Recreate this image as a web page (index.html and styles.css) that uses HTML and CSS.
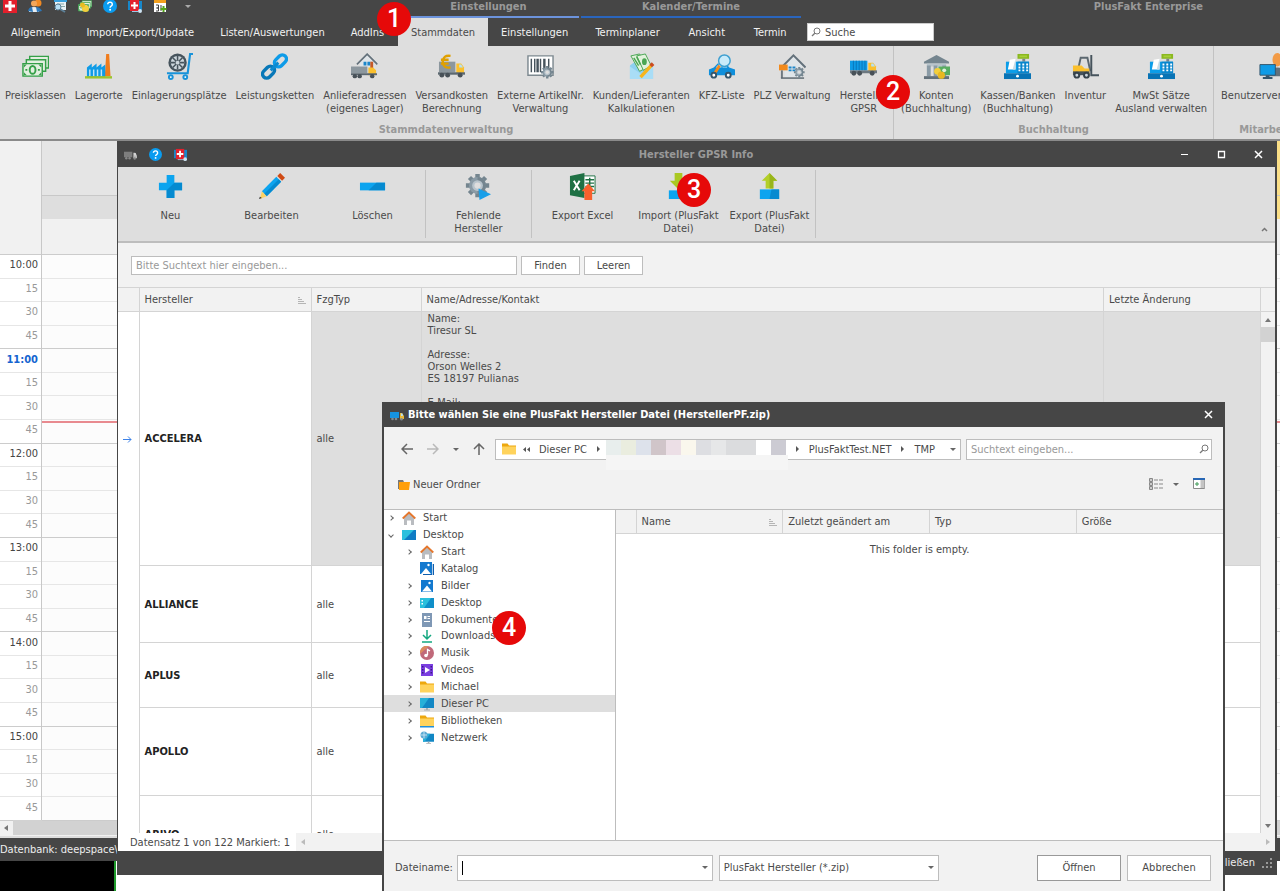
FILE: index.html
```html
<!DOCTYPE html>
<html lang="de">
<head>
    <meta charset="UTF-8">
    <meta name="viewport" content="width=device-width, initial-scale=1.0">
    <title>PlusFakt Enterprise</title>
    <link rel="stylesheet" href="styles.css">
</head>
<body>

    <!-- Shared icons -->
    <svg class="sprite" aria-hidden="true">
        <symbol id="i-help" viewBox="0 0 14 14"><circle cx="7" cy="7" r="7" fill="#0a9cf0"/><path d="M4.7 5.2a2.3 2.1 0 1 1 3.4 1.9q-1 .6-1 1.6" fill="none" stroke="#fff" stroke-width="1.5"/><circle cx="7.1" cy="10.7" r="1" fill="#fff"/></symbol>
        <symbol id="i-support" viewBox="0 0 14 14"><path fill="#1787c9" d="M0 2h14v9H0z"/><path fill="#9ccbe8" d="M4 12h6v1H4z"/><path fill="#e3202c" d="M2 1h9v11H2z"/><path fill="#fff" d="M5.500 3h2v2.500H10v2H7.500V10h-2V7.500H3v-2h2.500z"/><circle cx="12" cy="12" r="2" fill="#cfe4f2"/></symbol>
        <symbol id="i-truck" viewBox="0 0 28 28"><path fill="#0f9be6" d="M0 8h18v10H0z"/><path stroke="#0876b8" d="M3.500 8v10M6.500 8v10M9.500 8v10M12.500 8v10M15.500 8v10"/><path fill="#fbc02d" d="M19 10h5l3 4v6h-8z"/><path fill="#b3e1f5" d="M22 11h2l2 3h-4z"/><path fill="#6d7880" d="M0 18h28v3H0z"/><g fill="#485158"><circle cx="4" cy="21" r="2.500"/><circle cx="10" cy="21" r="2.500"/><circle cx="23" cy="21" r="2.500"/></g></symbol>
        <symbol id="i-truck-small" viewBox="0 0 14 14"><path fill="#1593e0" d="M0 4h9v6H0z"/><path fill="#e9b93a" d="M10 5h2l2 3v3h-4z"/><path fill="#b3e1f5" d="M11 5.500h1.500L13 8h-2z"/><g fill="#7f8a92"><circle cx="2.500" cy="11" r="1.300"/><circle cx="6" cy="11" r="1.300"/><circle cx="11.500" cy="11.300" r="1.300"/></g></symbol>
        <symbol id="i-register" viewBox="0 0 28 28"><path fill="#8ab81f" d="M14 1h12v5H14z"/><path fill="#a6cf3a" d="M16 2.500h8v2h-8z"/><path fill="#7a858c" d="M19 6h3v3h-3z"/><path fill="#0c9de8" d="M2 9h24v12H2z"/><path fill="#0885cc" d="M14 9h12v12H14z"/><path fill="#fff" d="M6 7l6-1v11H4z"/><path fill="#c9dce6" d="M12 6v11H9z"/><path fill="#fff" d="M15 11h2v2h-2zm4 0h2v2h-2zm4 0h2v2h-2zm-8 3h2v2h-2zm4 0h2v2h-2zm4 0h2v2h-2zm-8 3h2v2h-2zm4 0h2v2h-2zm4 0h2v2h-2z"/><path fill="#0873b5" d="M0 21h28v6H0z"/><circle cx="14" cy="24" r="1.500" fill="#fff"/></symbol>
        <symbol id="i-gear" viewBox="0 0 28 28"><g stroke="#74858f" stroke-width="5"><path d="M14 1v26M1 14h26M5 5l18 18M23 5L5 23"/></g><circle cx="14" cy="14" r="9.500" fill="#8a9ba6"/><path d="M14 4.500a9.500 9.500 0 0 1 0 19z" fill="#74858f"/><circle cx="14" cy="14" r="6" fill="#b8c4cc"/><circle cx="14" cy="14" r="3.500" fill="#dedede"/></symbol>
        <symbol id="i-lens" viewBox="0 0 10 10"><circle cx="6" cy="4" r="3" fill="none" stroke="#777"/><path d="M3.800 6.200L1 9" stroke="#777" stroke-width="1.300"/></symbol>
        <symbol id="i-home" viewBox="0 0 14 14"><path fill="#b9bcc0" d="M2 6l5-4 5 4v8H9V9.500H5V14H2z"/><path d="M.7 7.500L7 1.500l6.300 6" fill="none" stroke="#e5762b" stroke-width="1.800"/></symbol>
        <symbol id="i-picture" viewBox="0 0 14 14"><path fill="#1379cf" d="M1 1h12v12H1z"/><path fill="#fff" d="M2 12.500l5-6 5 6z"/><circle cx="9.500" cy="4" r="1.200" fill="#fff"/></symbol>
        <symbol id="i-folder" viewBox="0 0 14 14"><path fill="#eda80e" d="M0 1.500h5.500L7 3.500h7V12H0z"/><path fill="#ffd35c" d="M0 4.500h14v8H0z"/></symbol>
        <symbol id="i-screen" viewBox="0 0 14 14"><path fill="#1287c4" d="M0 1h14v10H0z"/><path fill="#27b0d8" d="M0 1h9L2 11H0z"/><path fill="#a6acb0" d="M6 11h2v1.500h2v1H4v-1h2z"/></symbol>
        <symbol id="i-sort" viewBox="0 0 8 8"><path d="M0 1.500h2M0 3.500h4M0 5.500h6M0 7.500h8" stroke="#b5b5b5"/></symbol>
        <symbol id="i-house" viewBox="0 0 28 28"><path fill="#dfe5e9" d="M6 13l9-9 9 9v12H6z"/><path d="M2.500 15L15 2.500 27.500 15" fill="none" stroke="#63717b" stroke-width="2"/></symbol>
        <symbol id="i-notes" viewBox="0 0 28 28"><g fill="#e3efe0" stroke="#35a048" stroke-width="1.500"><path d="M8 3.500h19.500v12H8z"/><path d="M4.500 7h20v12h-20z"/><path d="M1 11h20v13H1z"/></g><ellipse cx="11" cy="17.500" rx="3" ry="4" fill="none" stroke="#35a048" stroke-width="2"/><path fill="#35a048" d="M3.500 16.500h2v2h-2zm13 0h2v2h-2zM2 12h3L2 15zm18 0h-3l3 3zM2 23h3l-3-3zm18 0h-3l3-3z"/></symbol>
    </svg>

    <!-- Main window -->
    <header class="app-header">
        <div class="header-block header-main">
            <div class="quick-access">
                <button aria-label="PlusFakt"><svg viewBox="0 0 14 14"><path fill="#e3202c" d="M0 0h14v14H0z"/><path fill="#fff" d="M5.500 2h3v3.500H12v3H8.500V12h-3V8.500H2v-3h3.500z"/></svg></button>
                <button aria-label="Kunden"><svg viewBox="0 0 14 14"><circle cx="10" cy="4" r="3.500" fill="#f08a24"/><circle cx="6" cy="4.500" r="3" fill="#f3a65a"/><path fill="#e8eef2" d="M1 13q0-5 5-5t5 5z"/><path fill="#2d77b8" d="M0 12q1-4 4-4l1 5zm8-4q4 0 6 4l-5 1z"/></svg></button>
                <button aria-label="Rechnungen"><svg viewBox="0 0 14 14"><path fill="#e9f1f6" d="M2 0h11v11H2z"/><path fill="#3aa0dc" d="M1 0h13v3H1z"/><path d="M4 5h7M6 7.500h6" stroke="#8aa" /><circle cx="5" cy="8" r="3" fill="#b8dff4" stroke="#5d8198"/><path d="M7 10l5 3" stroke="#5d8198" stroke-width="2"/></svg></button>
                <button aria-label="Kasse"><svg viewBox="0 0 28 28"><use href="#i-notes"/><circle cx="15" cy="19" r="7" fill="#f3cf3c"/><circle cx="9" cy="12" r="5" fill="#e7bc22"/></svg></button>
                <button aria-label="Hilfe"><svg><use href="#i-help"/></svg></button>
                <button aria-label="Fernwartung"><svg><use href="#i-support"/></svg></button>
                <button aria-label="Kalender"><svg viewBox="0 0 14 14"><path fill="#fff" d="M1 1h12v12H1z"/><path fill="#f2a01e" d="M1 0h12v4H1z"/><path d="M3 6h2.500v3H3.500h2v3H3M8 6v6" fill="none" stroke="#444"/><path d="M10.500 7v6M7.500 10h6" stroke="#55a51c" stroke-width="2"/></svg></button>
                <span class="caret"></span>
            </div>
            <nav class="tabs">
                <button>Allgemein</button>
                <button>Import/Export/Update</button>
                <button>Listen/Auswertungen</button>
                <button>AddIns</button>
            </nav>
        </div>
        <div class="header-block context context-settings">
            <div class="context-title">Einstellungen</div>
            <nav class="tabs">
                <button class="active">Stammdaten</button>
                <button>Einstellungen</button>
            </nav>
        </div>
        <div class="header-block context context-calendar">
            <div class="context-title">Kalender/Termine</div>
            <nav class="tabs">
                <button>Terminplaner</button>
                <button>Ansicht</button>
                <button>Termin</button>
            </nav>
        </div>
        <div class="header-block header-rest">
            <div class="app-title">PlusFakt Enterprise</div>
            <label class="ribbon-search">
                <svg><use href="#i-lens"/></svg>
                <input type="text" placeholder="Suche" aria-label="Suche">
            </label>
        </div>
    </header>

    <section class="ribbon">
        <div class="ribbon-group">
            <div class="ribbon-items">
                <button><svg><use href="#i-notes"/></svg><span>Preisklassen</span></button>
                <button><svg viewBox="0 0 28 28"><path fill="#f07c1c" d="M22 1h3l1.500 23h-6z"/><path fill="#0f9be6" d="M2 15l5-4v4l5-4v4l5-4v4l4-3v13H2z"/><path d="M5 17v7M9 17v7M13 17v7M17 17v7" stroke="#bfe4f7" stroke-width="1.500"/><path fill="#9cc42c" d="M0 24h28v2.500H0z"/></svg><span>Lagerorte</span></button>
                <button><svg viewBox="0 0 28 28"><path d="M28 1h-3l-2.500 20H1" fill="none" stroke="#1993d9" stroke-width="2.200"/><circle cx="12" cy="10" r="9.500" fill="#46535c"/><circle cx="12" cy="10" r="7" fill="#cdd6dc"/><path d="M12 3v14M5 10h14M7 5l10 10M17 5L7 15" stroke="#46535c" stroke-width="1.600"/><circle cx="12" cy="10" r="2" fill="#cdd6dc"/><g fill="#fff" stroke="#1993d9" stroke-width="2"><circle cx="5" cy="25" r="2"/><circle cx="20" cy="25" r="2"/></g></svg><span>Einlagerungsplätze</span></button>
                <button><svg viewBox="0 0 28 28"><g fill="none" stroke-width="3.600"><rect x="13" y="4" width="14" height="8.500" rx="4.200" transform="rotate(-45 20 8)" stroke="#0d9be8"/><rect x="1" y="15.500" width="14" height="8.500" rx="4.200" transform="rotate(-45 8 20)" stroke="#0878b8"/></g><path d="M10 18l8-8" stroke="#0c8ad0" stroke-width="3"/></svg><span>Leistungsketten</span></button>
                <button><svg viewBox="0 0 28 28"><g transform="translate(4 -1)scale(.85)"><use href="#i-house" width="28" height="28"/></g><path fill="#1c86c9" d="M13 9h3v4h-3zm4 0h3v4h-3z"/><path fill="#c65a27" d="M20 9h3v8h-3z"/><path fill="#8c979e" d="M0 14h17v7H0z"/><path fill="#fbc02d" d="M18 15h5l3 3v5h-8z"/><path fill="#5c6870" d="M0 21h27v2H0z"/><g fill="#485158"><circle cx="4" cy="24" r="2.300"/><circle cx="9" cy="24" r="2.300"/><circle cx="22" cy="24" r="2.300"/></g></svg><span>Anlieferadressen<br>(eigenes Lager)</span></button>
                <button><svg viewBox="0 0 28 28"><path fill="#8c979e" d="M1 9h17v11H1z"/><path d="M13 3q-8-1-8 6t8 6M3 7h8M3 11h8" fill="none" stroke="#e0a000" stroke-width="2.500"/><path fill="#fbc02d" d="M19 11h5l3 4v6h-8z"/><path fill="#b3e1f5" d="M22 12h2l2 3h-4z"/><path fill="#5c6870" d="M0 20h28v2.500H0z"/><g fill="#485158"><circle cx="4" cy="23" r="2.500"/><circle cx="10" cy="23" r="2.500"/><circle cx="23" cy="23" r="2.500"/></g></svg><span>Versandkosten<br>Berechnung</span></button>
                <button><svg viewBox="0 0 28 28"><path fill="#fff" stroke="#7d8990" stroke-width="1.500" d="M1 3h26v20H1z"/><path d="M4.500 6v14M8 6v14M14 6v14M22.500 6v12" stroke="#46535c" stroke-width="1.500"/><path d="M11 6v14M18 6v12" stroke="#46535c" stroke-width="2.500"/><use href="#i-gear" x="14" y="13" width="14" height="14"/></svg><span>Externe ArtikelNr.<br>Verwaltung</span></button>
                <button><svg viewBox="0 0 28 28"><path fill="#8ed0f0" d="M2 13L14 4l12 9v14H2z"/><g fill="#e2f2dc" stroke="#4aa653"><path d="M3 3l9-2 8 14-8 4z"/><path d="M9 3l9-2 6 12-8 5z"/></g><path d="M6 5l5 8M9 4l4 8" stroke="#4aa653" stroke-width="1.500"/><ellipse cx="17" cy="9" rx="2.500" ry="3.500" fill="#4aa653"/><path fill="#a9ddf6" d="M2 14l12 8 12-8v13H2z"/><path d="M13 25L24 13" stroke="#f7b51e" stroke-width="3.500"/><path d="M23.500 13.500l2.500-2.500" stroke="#cc4b1f" stroke-width="3.800"/></svg><span>Kunden/Lieferanten<br>Kalkulationen</span></button>
                <button><svg viewBox="0 0 28 28"><path fill="#0f8fdb" d="M1 17l5-2 4-4h9l3 4 6 2v6H1z"/><path fill="#c3e7f8" d="M8 15l3-3h3v3zm7-3h3l2 3h-5z"/><path d="M12 13l-5 8" stroke="#f28a1c" stroke-width="3"/><circle cx="17" cy="8" r="6" fill="#c9ebfa" stroke="#3e9fd0" stroke-width="1.500"/><g fill="#fff" stroke="#35566c" stroke-width="2"><circle cx="6" cy="23" r="2.500"/><circle cx="21" cy="23" r="2.500"/></g></svg><span>KFZ-Liste</span></button>
                <button><svg viewBox="0 0 28 28"><use href="#i-house" width="28" height="28"/><path fill="#f28a1c" d="M0 12h9v6H0z"/><path fill="#6d7880" d="M2 18h2v8H2z"/><path fill="#1c86c9" d="M10 14h3v2h-3zm4 0h3v2h-3zm-4 3h3v2h-3zm4 0h3v2h-3z"/><path d="M2 26h24" stroke="#5c6870" stroke-width="1.500"/><use href="#i-gear" x="15" y="14" width="12" height="12"/></svg><span>PLZ Verwaltung</span></button>
                <button><svg><use href="#i-truck"/></svg><span>Hersteller<br>GPSR</span></button>
            </div>
            <div class="ribbon-caption">Stammdatenverwaltung</div>
        </div>
        <div class="ribbon-group">
            <div class="ribbon-items">
                <button><svg viewBox="0 0 28 28"><path fill="#74858f" d="M1 9L14 2l13 7v2H1z"/><path fill="#b8c4cc" d="M4 11h20v3H4z"/><path fill="#8a9ba6" d="M4 13h4v11H4zm7 0h4v11h-4zm9 0h4v11h-4z"/><path fill="#63717b" d="M1 24h26v3H1z"/><path fill="#58ad60" d="M16 14h12v9H16z"/><circle cx="22" cy="18" r="2" fill="#e3f3dd"/><circle cx="15" cy="19" r="3.500" fill="#f3cf3c"/><circle cx="19" cy="23" r="3.800" fill="#e9b820"/></svg><span>Konten<br>(Buchhaltung)</span></button>
                <button><svg><use href="#i-register"/></svg><span>Kassen/Banken<br>(Buchhaltung)</span></button>
                <button><svg viewBox="0 0 28 28"><path d="M7 14l2-9h7l3 14" fill="none" stroke="#5c6870" stroke-width="2"/><path fill="#fbc02d" d="M1 13h9l3 3h5v6H1z"/><path d="M20 2v21h8" fill="none" stroke="#46535c" stroke-width="2"/><path fill="#46535c" d="M1 19h17v4H1z"/><g fill="#cdd6dc" stroke="#35424b" stroke-width="2"><circle cx="5" cy="23" r="2.500"/><circle cx="15" cy="23" r="2.500"/></g></svg><span>Inventur</span></button>
                <button><svg><use href="#i-register"/></svg><span>MwSt Sätze<br>Ausland verwalten</span></button>
            </div>
            <div class="ribbon-caption">Buchhaltung</div>
        </div>
        <div class="ribbon-group">
            <div class="ribbon-items">
                <button><svg viewBox="0 0 28 28"><ellipse cx="20" cy="7" rx="5" ry="7" fill="#f29a45"/><path fill="#63717b" d="M12 24q0-9 8-9t8 9z"/><path fill="#0f9be6" stroke="#35566c" d="M2 12h16v11H2z"/><path fill="#35566c" d="M8 23h4v2h3v2H5v-2h3z"/></svg><span>Benutzerverwaltung</span></button>
            </div>
            <div class="ribbon-caption">Mitarbeiter</div>
        </div>
    </section>

    <!-- Appointment calendar -->
    <main class="calendar">
        <div class="time-column">
            <div class="time-head"></div>
            <ol class="slots">
                <li class="hour">10:00</li><li>15</li><li>30</li><li>45</li>
                <li class="hour current">11:00</li><li>15</li><li>30</li><li>45</li>
                <li class="hour">12:00</li><li>15</li><li>30</li><li>45</li>
                <li class="hour">13:00</li><li>15</li><li>30</li><li>45</li>
                <li class="hour">14:00</li><li>15</li><li>30</li><li>45</li>
                <li class="hour">15:00</li><li>15</li><li>30</li><li>45</li>
            </ol>
        </div>
        <div class="day-column">
            <div class="day-head"></div>
            <div class="day-sub"></div>
            <div class="day-all"></div>
            <ol class="slots">
                <li></li><li></li><li></li><li></li><li></li><li></li><li></li><li></li>
                <li></li><li></li><li></li><li></li><li></li><li></li><li></li><li></li>
                <li></li><li></li><li></li><li></li><li></li><li></li><li></li><li></li>
            </ol>
        </div>
        <div class="day-column today">
            <div class="day-head"></div>
            <div class="day-sub"></div>
            <div class="day-all"></div>
            <ol class="slots">
                <li></li><li></li><li></li><li></li><li></li><li></li><li></li><li></li>
                <li></li><li></li><li></li><li></li><li></li><li></li><li></li><li></li>
                <li></li><li></li><li></li><li></li><li></li><li></li><li></li><li></li>
            </ol>
        </div>
    </main>
    <div class="calendar-scroll"><span class="arrow-left"></span><div class="scroll-thumb"></div></div>
    <footer class="status-bar">Datenbank: deepspace\</footer>
    <div class="desktop"><div class="console"></div></div>

    <!-- Hersteller window -->
    <section class="window maker-window">
        <div class="window-title">
            <div class="window-icons">
                <svg class="gray"><use href="#i-truck-small"/></svg>
                <svg><use href="#i-help"/></svg>
                <svg><use href="#i-support"/></svg>
            </div>
            <h2>Hersteller GPSR Info</h2>
            <div class="window-controls">
                <button aria-label="Minimieren"><svg viewBox="0 0 9 9"><path d="M1 4.500h7" stroke="#fff"/></svg></button>
                <button aria-label="Maximieren"><svg viewBox="0 0 9 9"><path d="M1.500 1.500h6v6h-6z" fill="none" stroke="#fff" stroke-width="1.300"/></svg></button>
                <button aria-label="Fenster schließen"><svg viewBox="0 0 9 9"><path d="M1 1l7 7M8 1L1 8" stroke="#fff" stroke-width="1.500"/></svg></button>
            </div>
        </div>
        <div class="toolbar">
            <div class="tool-group">
                <button><svg viewBox="0 0 28 28"><path fill="#0ca4ef" d="M10 2h8v8h8v8h-8v8h-8v-8H2v-8h8z"/><path fill="#058ad0" d="M18 10h8v8h-8v8h-8v-8z"/></svg><span>Neu</span></button>
                <button><svg viewBox="0 0 28 28"><path fill="#0ca4ef" d="M4 19L19 4l5 5L9 24z"/><path fill="#058ad0" d="M6.500 21.500l15-15L24 9 9 24z"/><path fill="#fbd264" d="M4 19l5 5-7 3z"/><path fill="#333" d="M2 24.500L4 26l-3 1z"/><path fill="#cf4a14" d="M20 3l3-3 5 5-3 3z"/></svg><span>Bearbeiten</span></button>
                <button><svg viewBox="0 0 28 28"><path fill="#0ca4ef" d="M1 10h26v8H1z"/><path fill="#058ad0" d="M18 10h9v8H10z"/></svg><span>Löschen</span></button>
            </div>
            <div class="tool-group">
                <button><svg viewBox="0 0 28 28"><use href="#i-gear" width="26" height="26"/><path fill="#199fe9" d="M14 16l13 6-12 6z"/></svg><span>Fehlende<br>Hersteller</span></button>
            </div>
            <div class="tool-group">
                <button><svg viewBox="0 0 28 28"><path fill="#fff" stroke="#1f7145" d="M14 3h13v18H14z"/><path d="M17 7h9M17 10.500h9M17 14h9M21.500 5v14" stroke="#1f7145" stroke-width="1.500"/><path fill="#1f7145" d="M1 3l15-3v26L1 23z"/><path d="M5 8l6 10M11 8L5 18" stroke="#fff" stroke-width="2"/><path fill="#f8602c" d="M20 11l7 8h-3v9h-8v-9h-3z"/></svg><span>Export Excel</span></button>
                <button class="narrow"><svg viewBox="0 0 28 28"><path fill="#aac822" d="M10 0h8v8h5l-9 9-9-9h5z"/><path fill="#0ca4ef" d="M4 18h20v9H4z"/></svg><span>Import (PlusFakt Datei)</span></button>
                <button class="narrow"><svg viewBox="0 0 28 28"><path fill="#b3cf28" d="M14 0l8 8h-4v8h-8V8H6z"/><path fill="#98b51a" d="M14 0l8 8h-4v8h-4z"/><path fill="#0ca4ef" d="M4 17h20v10H4z"/><path fill="#058ad0" d="M16 17h8v10H14z"/></svg><span>Export (PlusFakt Datei)</span></button>
            </div>
            <button class="collapse" aria-label="Menüband minimieren"><svg viewBox="0 0 7 5"><path d="M1 4l2.500-2.500L6 4" fill="none" stroke="#777" stroke-width="1.500"/></svg></button>
        </div>
        <form class="search-row">
            <input type="text" placeholder="Bitte Suchtext hier eingeben..." aria-label="Suchtext">
            <button type="button">Finden</button>
            <button type="button">Leeren</button>
        </form>
        <div class="grid-area">
            <div class="grid-view">
                <table class="maker-table">
                    <colgroup><col class="col-mark"><col class="col-maker"><col class="col-type"><col><col class="col-date"></colgroup>
                    <thead>
                        <tr><th></th><th>Hersteller<svg class="sort"><use href="#i-sort"/></svg></th><th>FzgTyp</th><th>Name/Adresse/Kontakt</th><th>Letzte Änderung</th></tr>
                    </thead>
                    <tbody>
                        <tr class="row-xl selected">
                            <td><svg class="row-arrow" viewBox="0 0 9 9"><path d="M0 4.500h8M5 1.500l3 3-3 3" fill="none" stroke="#3c82e8"/></svg></td>
                            <td class="maker">ACCELERA</td><td>alle</td>
                            <td class="address">Name:<br>Tiresur SL<br><br>Adresse:<br>Orson Welles 2<br>ES 18197 Pulianas<br><br>E-Mail:</td><td></td>
                        </tr>
                        <tr class="row-m"><td></td><td class="maker">ALLIANCE</td><td>alle</td><td></td><td></td></tr>
                        <tr class="row-s"><td></td><td class="maker">APLUS</td><td>alle</td><td></td><td></td></tr>
                        <tr class="row-l"><td></td><td class="maker">APOLLO</td><td>alle</td><td></td><td></td></tr>
                        <tr class="row-m"><td></td><td class="maker">ARIVO</td><td>alle</td><td></td><td></td></tr>
                    </tbody>
                </table>
            </div>
            <div class="grid-scroll">
                <div class="scroll-head"></div>
                <span class="arrow-up"></span>
                <div class="scroll-thumb"></div>
                <span class="arrow-down"></span>
            </div>
        </div>
        <div class="grid-footer">
            <span class="record">Datensatz 1 von 122 Markiert: 1</span>
            <div class="grid-hscroll"><span class="arrow-left"></span><span class="arrow-right"></span></div>
        </div>
        <div class="window-bottom">
            <button>Schließen</button>
            <svg class="grip" viewBox="0 0 10 10"><path fill="#999" d="M8 0h2v2H8zM8 4h2v2H8zM4 4h2v2H4zM8 8h2v2H8zM4 8h2v2H4zM0 8h2v2H0z"/></svg>
        </div>
    </section>

    <!-- File dialog -->
    <section class="window file-dialog">
        <div class="window-title">
            <svg class="title-icon"><use href="#i-truck-small"/></svg>
            <h2>Bitte wählen Sie eine PlusFakt Hersteller Datei (HerstellerPF.zip)</h2>
            <div class="window-controls">
                <button aria-label="Schließen"><svg viewBox="0 0 9 9"><path d="M1 1l7 7M8 1L1 8" stroke="#fff" stroke-width="1.500"/></svg></button>
            </div>
        </div>
        <div class="path-row">
            <div class="path-nav">
                <button aria-label="Zurück"><svg viewBox="0 0 12 12"><path d="M12 6H1M6 1L1 6l5 5" fill="none" stroke="#666" stroke-width="1.500"/></svg></button>
                <button aria-label="Vorwärts"><svg viewBox="0 0 12 12"><path d="M0 6h11M6 1l5 5-5 5" fill="none" stroke="#b9b9b9" stroke-width="1.500"/></svg></button>
                <button aria-label="Verlauf"><span class="caret"></span></button>
                <button aria-label="Nach oben"><svg viewBox="0 0 12 12"><path d="M6 12V1M1 6l5-5 5 5" fill="none" stroke="#666" stroke-width="1.500"/></svg></button>
            </div>
            <div class="breadcrumb">
                <svg class="crumb-folder"><use href="#i-folder"/></svg>
                <svg class="crumb-back" viewBox="0 0 7 5"><path fill="#555" d="M3 0v5L0 2.500zM7 0v5L4 2.500z"/></svg>
                <button>Dieser PC</button>
                <span class="crumb-sep"></span>
                <div class="hidden-path">
                    <i class="m1"></i><i class="m2"></i><i class="m3"></i><i class="m4"></i><i class="m5"></i><i class="m6"></i><i class="m7"></i><i class="m8"></i><i class="m9"></i><i class="m9"></i><i class="m10"></i><i class="m11"></i>
                </div>
                <span class="crumb-sep"></span>
                <button>PlusFaktTest.NET</button>
                <span class="crumb-sep"></span>
                <button>TMP</button>
                <span class="caret"></span>
            </div>
            <label class="file-search">
                <input type="text" placeholder="Suchtext eingeben..." aria-label="Dateien suchen">
                <svg><use href="#i-lens"/></svg>
            </label>
        </div>
        <div class="command-row">
            <button><svg viewBox="0 0 12 12"><path fill="#777" d="M0 1h5l1 2h5v7H0z"/><path fill="#ff9f0a" d="M1 3h11l-1 8H1z"/></svg>Neuer Ordner</button>
            <div class="view-tools">
                <button aria-label="Ansicht"><svg viewBox="0 0 14 12"><path d="M.5.500h3v3h-3zM.5 4.500h3v3h-3zM.5 8.500h3v3h-3z" fill="#ccc" stroke="#888"/><path d="M5 2h4M10 2h4M5 6h4M10 6h4M5 10h4M10 10h4" stroke="#888"/></svg></button>
                <span class="caret"></span>
                <button aria-label="Vorschau"><svg viewBox="0 0 12 12"><path fill="#fff" stroke="#8a8a8a" d="M.5 1.500h11v9H.5z"/><path fill="#c4c4c4" d="M7.500 2h4v8h-4z"/><path fill="#2867b5" d="M0 0h12v2H0z"/><path d="M2 6h4M4 4v4" stroke="#3e9a57"/></svg></button>
            </div>
        </div>
        <div class="browser">
            <ul class="tree">
                <li><span class="twist"></span><svg><use href="#i-home"/></svg>Start</li>
                <li><span class="twist open"></span><svg viewBox="0 0 14 14"><path fill="#0f7cc4" d="M0 2h14v10H0z"/><path fill="#2bc0dd" d="M0 2h12L2 12H0z"/></svg>Desktop</li>
                <li class="sub"><span class="twist"></span><svg><use href="#i-home"/></svg>Start</li>
                <li class="sub"><span class="twist none"></span><svg viewBox="0 0 14 14"><path fill="#0f5fae" d="M3 2h11v11H3z"/><path fill="#fff" d="M12 1h.7v12H12z"/><path fill="#1379cf" d="M0 0h12v12H0z"/><path fill="#fff" d="M1 12l5-6 5 6z"/><circle cx="8.500" cy="3" r="1.200" fill="#fff"/></svg>Katalog</li>
                <li class="sub"><span class="twist"></span><svg><use href="#i-picture"/></svg>Bilder</li>
                <li class="sub"><span class="twist"></span><svg viewBox="0 0 14 14"><path fill="#0f8fc9" d="M0 2h14v10H0z"/><path fill="#2bc0dd" d="M0 2h11L4 12H0z"/><path fill="#fff" d="M1.500 4h1.500v1.500H1.500zm0 3h1.500v1.500H1.500z"/></svg>Desktop</li>
                <li class="sub"><span class="twist"></span><svg viewBox="0 0 14 14"><path fill="#7f98b5" d="M2 0h10v14H2z"/><path fill="#fff" d="M4 3h2.500v3H4zm3.500 0H10v1H7.500zm0 2H10v1H7.500zM4 8h6v1H4z"/></svg>Dokumente</li>
                <li class="sub"><span class="twist"></span><svg viewBox="0 0 14 14"><path d="M7 1v8M3 6l4 4 4-4M2 13h10" fill="none" stroke="#14a880" stroke-width="1.500"/></svg>Downloads</li>
                <li class="sub"><span class="twist"></span><svg viewBox="0 0 14 14"><circle cx="7" cy="7" r="7" fill="#c0697a"/><path fill="#db8a60" d="M0 8a7 7 0 0 1 9-8z"/><path d="M7.500 9V3.500L10 5" fill="none" stroke="#fff" stroke-width="1.300"/><circle cx="6" cy="9.500" r="1.800" fill="#fff"/></svg>Musik</li>
                <li class="sub"><span class="twist"></span><svg viewBox="0 0 14 14"><path fill="#7b3fe0" d="M1 1h12v12H1z"/><path fill="#3c1a86" d="M2 3h1.500v1.500H2zm0 3h1.500v1.500H2zm0 3h1.500v1.500H2zm8.500-6H12v1.500h-1.500zm0 3H12v1.500h-1.500zm0 3H12v1.500h-1.500z"/><path fill="#fff" d="M5 4l5 3-5 3z"/></svg>Videos</li>
                <li class="sub"><span class="twist"></span><svg><use href="#i-folder"/></svg>Michael</li>
                <li class="sub chosen"><span class="twist"></span><svg><use href="#i-screen"/></svg>Dieser PC</li>
                <li class="sub"><span class="twist"></span><svg viewBox="0 0 14 14"><use href="#i-folder" width="14" height="14"/><path fill="#1f8fdc" d="M0 12h14v1.500H0z"/></svg>Bibliotheken</li>
                <li class="sub"><span class="twist"></span><svg viewBox="0 0 14 14"><g transform="translate(3 2)scale(.8)"><use href="#i-screen" width="14" height="14"/></g><circle cx="4" cy="4" r="3.500" fill="#5aa9d3"/><path d="M1 4h6M4 .5v7" stroke="#d3ecf7" stroke-width=".8"/></svg>Netzwerk</li>
            </ul>
            <div class="file-list">
                <table class="file-table">
                    <colgroup><col class="col-mark"><col><col><col><col></colgroup>
                    <thead>
                        <tr><th></th><th>Name<svg class="sort"><use href="#i-sort"/></svg></th><th>Zuletzt geändert am</th><th>Typ</th><th>Größe</th></tr>
                    </thead>
                </table>
                <p>This folder is empty.</p>
            </div>
        </div>
        <div class="dialog-footer">
            <label for="filename">Dateiname:</label>
            <div class="combo combo-name"><span class="text-cursor"></span><input type="text" id="filename"><span class="caret"></span></div>
            <div class="combo combo-filter">
                <select aria-label="Dateityp"><option>PlusFakt Hersteller (*.zip)</option></select>
                <span class="caret"></span>
            </div>
            <button class="primary">Öffnen</button>
            <button>Abbrechen</button>
        </div>
    </section>

    <!-- Step markers -->
    <div class="step step-1">1</div>
    <div class="step step-2">2</div>
    <div class="step step-3">3</div>
    <div class="step step-4">4</div>

</body>
</html>
```

FILE: styles.css
```css
/* Global Styles */
* {
    margin: 0;
    padding: 0;
    box-sizing: border-box;
}

body {
    position: relative;
    height: 100vh;
    display: flex;
    flex-direction: column;
    overflow: hidden;
    background: #fff;
    color: #4a4a4a;
    font-family: Tahoma, 'DejaVu Sans Condensed', 'Noto Sans', sans-serif;
    font-size: 11px;
    line-height: 14px;
}

button,
input,
select {
    font: inherit;
    color: inherit;
    border: none;
    background: none;
}

button {
    white-space: nowrap;
}

input:focus {
    outline: none;
}

ul,
ol {
    list-style: none;
}

svg {
    display: block;
    flex-shrink: 0;
}

table {
    width: 100%;
    border-collapse: collapse;
    table-layout: fixed;
}

.sprite {
    position: absolute;
    width: 0;
    height: 0;
}

.caret {
    flex-shrink: 0;
    border: 3px solid transparent;
    border-top-color: #666;
    border-bottom: none;
}

.arrow-left,
.arrow-right,
.arrow-up,
.arrow-down {
    flex-shrink: 0;
    border: 3px solid transparent;
}

.arrow-left { border-right: 4px solid #777; border-left: none; }
.arrow-right { border-left: 4px solid #bbb; border-right: none; }
.arrow-up { border-bottom: 4px solid #777; border-top: none; }
.arrow-down { border-top: 4px solid #777; border-bottom: none; }

.scroll-thumb {
    background: #d2d2d2;
}

/* Header */
.app-header {
    display: flex;
    flex-shrink: 0;
    height: 46px;
    background: #464646;
    color: #f2f2f2;
}

.header-block {
    display: flex;
    flex-direction: column;
    flex-shrink: 0;
}

.quick-access {
    display: flex;
    align-items: center;
    gap: 11px;
    height: 18px;
    padding: 0 3px 6px;
}

.quick-access svg {
    width: 14px;
    height: 14px;
}

.quick-access .caret {
    margin-left: 7px;
    border-top-color: #aaa;
}

.context-title,
.app-title {
    height: 18px;
    padding-bottom: 4px;
    line-height: 13px;
    font-weight: bold;
    text-align: center;
    color: #999;
}

.context {
    margin-right: 2px;
}

.context-title {
    border-bottom: 2px solid #6c93dc;
}

.context-calendar .context-title {
    border-color: #2a65bd;
}

.tabs {
    display: flex;
    flex: 1;
}

.tabs button {
    padding: 2px 13px 0;
}

.header-main {
    width: 398px;
}

.header-main .tabs button:first-child {
    padding-left: 11px;
}

.context-settings {
    width: 181px;
}

.context-calendar {
    width: 220px;
}

.context-calendar .tabs button {
    flex: 1 0 auto;
}

.tabs .active {
    background: #dedede;
    color: #4a4a4a;
}

.header-rest {
    flex: 1;
}

.app-title {
    padding-right: 77px;
    text-align: right;
}

.ribbon-search {
    display: flex;
    align-items: center;
    gap: 4px;
    width: 127px;
    height: 19px;
    margin: 5px 4px;
    padding: 0 3px;
    background: #fff;
    border: 1px solid #ccc;
}

.ribbon-search svg {
    width: 10px;
    height: 10px;
}

.ribbon-search input {
    width: 90px;
    padding-top: 2px;
}

.ribbon-search input::placeholder {
    color: #4a4a4a;
}

/* Ribbon */
.ribbon {
    display: flex;
    flex-shrink: 0;
    height: 95px;
    overflow: hidden;
    background: #dedede;
    border-bottom: 2px solid #8a8a8a;
}

.ribbon-group {
    display: flex;
    flex-direction: column;
    justify-content: space-between;
    flex-shrink: 0;
    padding: 7px 2px 2px;
    border-right: 1px solid #c2c2c2;
}

.ribbon-group:first-child {
    padding-left: 0;
    padding-right: 1px;
}

.ribbon-items {
    display: flex;
}

.ribbon-items button,
.toolbar .tool-group button {
    display: flex;
    flex-direction: column;
    align-items: center;
    gap: 9px;
    padding: 0 4px 0 5px;
    line-height: 13px;
}

.ribbon-items svg,
.tool-group svg {
    width: 27px;
    height: 27px;
}

.ribbon-caption {
    font-weight: bold;
    text-align: center;
    color: #999;
}

/* Calendar */
.calendar {
    display: flex;
    flex: 1;
}

.time-column,
.day-column {
    display: flex;
    flex-direction: column;
}

.time-column {
    width: 42px;
    border-right: 1px solid #c8c8c8;
}

.time-head {
    height: 114px;
    background: #f1f1f1;
    border-bottom: 1px solid #ccc;
}

.day-column {
    position: relative;
    flex: 1;
    background: #fcfcfc;
}

.day-column.today {
    flex: 0 0 3px;
}

.day-head {
    height: 55px;
    background: #e5e5e5;
    border-bottom: 1px solid #c8c8c8;
}

.day-sub {
    height: 23px;
    background: #dedede;
}

.day-all {
    height: 36px;
    background: #f1f1f1;
    border-bottom: 1px solid #ccc;
}

.today .day-head,
.today .day-sub {
    background: #fbdf87;
}

/* line for the current time */
.day-column::after {
    content: '';
    position: absolute;
    left: 0;
    right: 0;
    top: 280px;
    height: 2px;
    background: #e88a8f;
}

.slots {
    display: flex;
    flex-direction: column;
    flex: 1;
}

.slots li {
    display: flex;
    align-items: center;
    justify-content: flex-end;
    flex: 1;
    padding: 0 3px 2px 0;
    border-bottom: 1px solid #e6e6e6;
    color: #999;
}

.slots li:nth-child(4n) {
    border-color: #ccc;
}

.slots .hour {
    color: #444;
}

.slots .current {
    font-weight: bold;
    color: #1565d0;
}

.calendar-scroll {
    display: flex;
    align-items: center;
    gap: 5px;
    flex-shrink: 0;
    height: 17px;
    padding: 0 0 2px 4px;
    background: #f1f1f1;
    border-bottom: 2px solid #ddd;
}

.calendar-scroll .scroll-thumb {
    flex: 1;
    height: 15px;
}

.status-bar {
    flex-shrink: 0;
    height: 23px;
    padding: 5px 0 4px;
    background: #464646;
    color: #eee;
}

.desktop {
    flex-shrink: 0;
    height: 30px;
}

.console {
    width: 116px;
    height: 100%;
    background: #000;
    border-right: 2px solid #1f9a2c;
}

/* Windows */
.window {
    position: absolute;
    display: flex;
    flex-direction: column;
    background: #f2f2f2;
    border: 2px solid #464646;
}

.window-title {
    display: flex;
    align-items: center;
    flex-shrink: 0;
    height: 24px;
    background: #464646;
}

.window-title h2 {
    font-size: 11px;
}

.window-controls {
    display: flex;
    gap: 28px;
}

.window-controls svg {
    width: 9px;
    height: 9px;
}

.maker-window {
    left: 117px;
    right: 3px;
    top: 141px;
    bottom: 16px;
    border-width: 1px 2px 0 1px;
}

.maker-window .window-title {
    justify-content: space-between;
    height: 25px;
    padding: 0 12px 0 6px;
}

.maker-window h2 {
    color: #999;
}

.window-icons {
    display: flex;
    gap: 12px;
    width: 88px;
}

.window-icons svg {
    width: 13px;
    height: 13px;
}

.window-icons .gray {
    filter: grayscale(1);
}

/* Toolbar */
.toolbar {
    display: flex;
    flex-shrink: 0;
    height: 76px;
    background: #dedede;
    border-bottom: 2px solid #bdbdbd;
}

.tool-group {
    display: flex;
    margin: 3px 0;
    border-right: 1px solid #c2c2c2;
}

.tool-group:first-child {
    padding: 0 2px;
}

.toolbar .tool-group button {
    width: 101px;
    padding: 3px 4px 0;
    white-space: normal;
}

.tool-group:nth-child(2) button {
    width: 105px;
}

.toolbar .tool-group .narrow {
    width: 91px;
}

.collapse {
    margin: auto 7px 9px auto;
}

.collapse svg {
    width: 7px;
    height: 5px;
}

/* Search Row */
.search-row {
    display: flex;
    align-items: center;
    gap: 4px;
    flex-shrink: 0;
    height: 44px;
    padding: 0 13px;
}

.search-row input,
.search-row button {
    height: 19px;
    background: #fff;
    border: 1px solid #bdbdbd;
}

.search-row input {
    width: 386px;
    padding: 0 4px;
}

.search-row button {
    width: 59px;
    padding-top: 1px;
}

input::placeholder {
    color: #999;
}

/* Hersteller Grid */
.grid-area {
    display: flex;
    flex: 1;
    min-height: 0;
    border-top: 1px solid #d4d4d4;
}

.grid-view {
    flex: 1;
    overflow: hidden;
    background: #fff;
}

.col-mark { width: 21px; }
.col-maker { width: 172px; }
.col-type { width: 110px; }
.col-date { width: 157px; }

th {
    position: relative;
    height: 23px;
    padding: 2px 5px 0;
    background: #f2f2f2;
    border-right: 1px solid #d4d4d4;
    border-bottom: 1px solid #d4d4d4;
    font-weight: normal;
    text-align: left;
}

.sort {
    position: absolute;
    right: 5px;
    top: 8px;
    width: 8px;
    height: 8px;
}

.maker-table td {
    padding: 2px 5px 0;
    border-right: 1px solid #d4d4d4;
    border-bottom: 1px solid #d4d4d4;
    vertical-align: middle;
}

.maker-table td:first-child {
    border-bottom: none;
}

.row-xl { height: 254px; }
.row-l { height: 88px; }
.row-m { height: 77px; }
.row-s { height: 65px; }

.selected td {
    background: #dedede;
}

.selected td:first-child,
.selected .maker {
    background: #fff;
}

.maker-table .maker {
    font-weight: bold;
    color: #222;
}

.maker-table .address {
    padding: 1px 6px;
    line-height: 12px;
    vertical-align: top;
}

.row-arrow {
    width: 9px;
    height: 9px;
}

.grid-scroll {
    display: flex;
    flex-direction: column;
    align-items: center;
    width: 14px;
}

.scroll-head {
    width: 100%;
    height: 24px;
    margin-bottom: 6px;
    border-bottom: 1px solid #d4d4d4;
}

.grid-scroll .scroll-thumb {
    width: 100%;
    height: 15px;
    margin-top: 5px;
}

.arrow-down {
    margin: auto 0 5px;
}

.grid-footer {
    display: flex;
    flex-shrink: 0;
    height: 18px;
    background: #fff;
}

.record {
    width: 178px;
    padding: 3px 0 0 12px;
    white-space: nowrap;
}

.grid-hscroll {
    display: flex;
    align-items: center;
    justify-content: space-between;
    flex: 1;
    padding: 0 5px;
    background: #f2f2f2;
}

.grid-hscroll .arrow-left {
    border-right-color: #bbb;
}

.window-bottom {
    display: flex;
    align-items: center;
    justify-content: flex-end;
    gap: 7px;
    flex-shrink: 0;
    height: 24px;
    padding-right: 3px;
    background: #464646;
    color: #eee;
}

.grip {
    width: 10px;
    height: 10px;
}

/* File Dialog */
.file-dialog {
    left: 382px;
    right: 55px;
    top: 402px;
    bottom: -8px;
    border-top: none;
}

.file-dialog .window-title {
    gap: 4px;
    height: 25px;
    padding: 0 10px 0 6px;
    color: #fff;
}

.title-icon {
    width: 14px;
    height: 14px;
}

.file-dialog .window-controls {
    margin-left: auto;
}

.path-row {
    display: flex;
    align-items: center;
    flex-shrink: 0;
    height: 44px;
    padding: 0 11px 0 17px;
}

.path-nav {
    display: flex;
    align-items: center;
    gap: 14px;
    width: 83px;
    margin-right: 11px;
}

.path-nav svg {
    width: 12px;
    height: 12px;
}

.path-nav button {
    display: flex;
}

.breadcrumb {
    display: flex;
    align-items: center;
    flex: 1;
    height: 21px;
    padding: 0 4px 0 6px;
    background: #fff;
    border: 1px solid #bdbdbd;
}

.breadcrumb button {
    padding-top: 1px;
}

.crumb-folder {
    width: 14px;
    height: 14px;
}

.crumb-back {
    width: 7px;
    height: 5px;
    margin: 0 9px 0 7px;
}

.crumb-sep {
    margin: 0 10px;
    border: 3px solid transparent;
    border-left-color: #555;
    border-right: none;
}

.breadcrumb .caret {
    margin-left: auto;
}

.hidden-path {
    position: relative;
    display: flex;
    align-self: flex-start;
    width: 180px;
    margin-left: -4px;
}

.hidden-path::after {
    content: '';
    position: absolute;
    left: 0;
    top: 15px;
    width: 182px;
    height: 15px;
    background: #f5f5f5;
}

.hidden-path i {
    flex: 1;
    height: 15px;
}

.m1 { background: #e8eeed; }
.m2 { background: #eaeddf; }
.m3 { background: #dde2eb; }
.m4 { background: #d0c5c9; }
.m5 { background: #ecdfe6; }
.m6 { background: #faf7ed; }
.m7 { background: #dddee2; }
.m8 { background: #e6e7e8; }
.m9 { background: #dbdcde; }
.m10 { background: #fff; }
.m11 { background: #cccbd3; }

.file-search {
    display: flex;
    align-items: center;
    width: 246px;
    height: 21px;
    margin-left: 5px;
    padding: 0 2px 0 4px;
    background: #fff;
    border: 1px solid #bdbdbd;
}

.file-search input {
    flex: 1;
    min-width: 0;
    padding-top: 1px;
}

.file-search svg {
    width: 10px;
    height: 10px;
}

.command-row {
    display: flex;
    align-items: flex-start;
    justify-content: space-between;
    flex-shrink: 0;
    height: 38px;
    padding: 7px 18px 0 14px;
}

.command-row button {
    display: flex;
    align-items: center;
    gap: 3px;
}

.command-row svg {
    width: 12px;
    height: 12px;
}

.view-tools {
    display: flex;
    align-items: center;
    gap: 10px;
}

.view-tools .caret {
    margin-right: 4px;
}

.view-tools button:first-child svg {
    width: 14px;
}

/* Tree and File List */
.browser {
    display: flex;
    flex: 1;
    min-height: 0;
    background: #fff;
    border-top: 1px solid #bdbdbd;
    border-bottom: 1px solid #bdbdbd;
}

.tree {
    display: flex;
    flex-direction: column;
    width: 232px;
    padding-bottom: 94px;
    border-right: 1px solid #bdbdbd;
}

.tree li {
    display: flex;
    align-items: center;
    flex: 1;
    padding-left: 5px;
}

.tree .sub {
    padding-left: 23px;
}

.tree svg {
    width: 14px;
    height: 14px;
    margin: 0 7px 0 9px;
}

.tree .chosen {
    background: #dedede;
}

.twist {
    width: 4px;
    height: 4px;
    border: solid #666;
    border-width: 1px 1px 0 0;
    transform: rotate(45deg);
}

.twist.open {
    transform: rotate(135deg);
}

.twist.none {
    visibility: hidden;
}

.file-list {
    flex: 1;
}

.file-table .col-mark {
    width: 20px;
}

.file-table th:last-child {
    border-right: none;
}

.file-list p {
    padding-top: 9px;
    text-align: center;
}

.dialog-footer {
    display: flex;
    align-items: center;
    flex-shrink: 0;
    height: 56px;
    padding: 0 12px 3px 11px;
}

.combo {
    display: flex;
    align-items: center;
    height: 26px;
    padding: 0 4px;
    background: #fff;
    border: 1px solid #bdbdbd;
}

.combo input,
.combo select {
    flex: 1;
    min-width: 0;
    appearance: none;
}

.combo-name {
    width: 256px;
    margin: 0 6px 0 4px;
}

.combo-filter {
    width: 220px;
    margin-right: auto;
}

.text-cursor {
    width: 1px;
    height: 14px;
    background: #000;
}

.dialog-footer button {
    width: 84px;
    height: 26px;
    margin-left: 6px;
    background: #fff;
    border: 1px solid #bdbdbd;
}

.dialog-footer .primary {
    border-color: #999;
}

/* Step Markers */
.step {
    position: absolute;
    width: 34px;
    height: 34px;
    border-radius: 50%;
    background: #e60909;
    color: #fff;
    font-family: Roboto, 'Open Sans', sans-serif;
    font-size: 25px;
    font-weight: 500;
    line-height: 34px;
    text-align: center;
}

.step-1 { left: 377px; top: 2px; }
.step-2 { left: 876px; top: 75px; }
.step-3 { left: 677px; top: 173px; }
.step-4 { left: 492px; top: 611px; }
```
